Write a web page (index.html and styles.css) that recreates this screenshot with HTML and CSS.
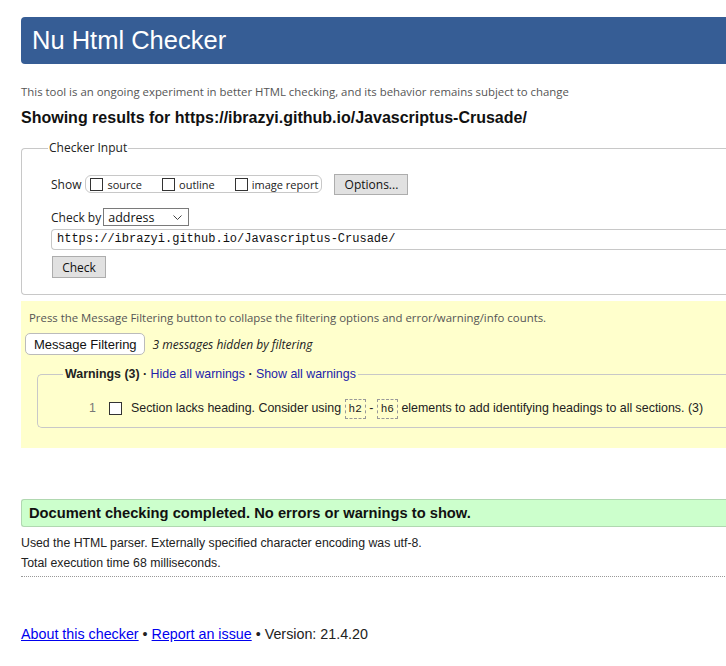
FILE: index.html
```html
<!DOCTYPE html>
<html>
<head>
<meta charset="utf-8">
<link rel="stylesheet" href="styles.css">
</head>
<body>
<div class="page">
  <h1 class="banner">Nu Html Checker</h1>
  <p class="intro">This tool is an ongoing experiment in better HTML checking, and its behavior remains subject to change</p>
  <h2 class="results">Showing results for https://ibrazyi.github.io/Javascriptus-Crusade/</h2>

  <fieldset class="input-set">
    <legend>Checker Input</legend>
    <div class="row show-row">
      <span class="lbl">Show</span>
      <span class="pill">
        <label><span class="cb"></span>source</label>
        <label><span class="cb"></span>outline</label>
        <label><span class="cb"></span>image report</label>
      </span>
      <span class="btn opts">Options...</span>
    </div>
    <div class="row by-row">
      <span class="lbl">Check by</span>
      <span class="select">address<svg class="chev" width="9" height="5" viewBox="0 0 9 5"><path d="M0.5 0.5 L4.5 4.5 L8.5 0.5" fill="none" stroke="#444" stroke-width="1"/></svg></span>
    </div>
    <div class="url">https://ibrazyi.github.io/Javascriptus-Crusade/</div>
    <span class="btn check">Check</span>
  </fieldset>

  <div class="filters">
    <p class="note">Press the Message Filtering button to collapse the filtering options and error/warning/info counts.</p>
    <div class="filter-row">
      <span class="mf">Message Filtering</span>
      <em class="hidden-count">3 messages hidden by filtering</em>
    </div>
    <fieldset class="warn-set">
      <legend>Warnings (3) · <a>Hide all warnings</a> · <a>Show all warnings</a></legend>
      <div class="warn-item">
        <span class="num">1</span>
        <span class="wcb"></span>
        <span class="wtext">Section lacks heading. Consider using <code>h2</code> - <code>h6</code> elements to add identifying headings to all sections. (3)</span>
      </div>
    </fieldset>
  </div>

  <p class="success">Document checking completed. No errors or warnings to show.</p>
  <p class="meta first">Used the HTML parser. Externally specified character encoding was utf-8.</p>
  <p class="meta">Total execution time 68 milliseconds.</p>
  <hr class="dots">

  <p class="footer"><a>About this checker</a> • <a>Report an issue</a> • Version: 21.4.20</p>
</div>
</body>
</html>
```

FILE: styles.css
```css
html, body {
  margin: 0;
  padding: 0;
  overflow: hidden;
  background: #fff;
}
body {
  font-family: "Liberation Sans", Arial, sans-serif;
  color: #222;
}
.page {
  padding-left: 21px;
  width: 760px;
}
.banner {
  margin: 17px 0 0 0;
  height: 47px;
  line-height: 47px;
  background: #365d95;
  color: #fff;
  font-weight: normal;
  font-size: 25.5px;
  padding-left: 11px;
  border-radius: 4px 0 0 4px;
}
.intro {
  margin: 19px 0 0 0;
  font-family: "Open Sans", sans-serif;
  font-size: 11.4px;
  line-height: 17px;
  color: #555;
}
.results {
  margin: 8px 0 0 0;
  font-size: 16px;
  line-height: 20px;
  font-weight: bold;
  color: #111;
}
.input-set {
  margin: 12px 0 0 0;
  border: 1px solid #c8c8c8;
  border-right: none;
  border-radius: 4px 0 0 4px;
  padding: 0 0 16px 29px;
  font-family: "Open Sans", sans-serif;
  font-size: 12px;
}
.input-set legend {
  margin-left: -3px;
  padding: 0 1px;
  font-size: 12px;
  line-height: 16px;
  color: #222;
}
.row {
  display: flex;
  align-items: center;
}
.show-row {
  margin-top: 17px;
  height: 22px;
}
.lbl {
  color: #222;
}
.pill {
  display: inline-flex;
  align-items: center;
  margin-left: 4px;
  height: 18px;
  width: 237px;
  box-sizing: border-box;
  border: 1px solid #c8c8c8;
  border-radius: 6px;
  padding: 0 0 0 4px;
  font-size: 11px;
}
.pill label {
  display: inline-flex;
  align-items: center;
  margin-right: 20px;
}
.pill label:last-child {
  margin-right: 0;
}
.cb {
  display: inline-block;
  width: 11px;
  height: 11px;
  border: 1px solid #333;
  margin-right: 4px;
  background: #fff;
}
.btn {
  display: inline-flex;
  align-items: center;
  justify-content: center;
  background: #e1e1e1;
  border: 1px solid #adadad;
  font-size: 12px;
  color: #111;
  box-sizing: border-box;
}
.opts {
  margin-left: 12px;
  width: 74px;
  height: 21px;
}
.by-row {
  margin-top: 13px;
  height: 18px;
}
.select {
  display: inline-flex;
  align-items: center;
  justify-content: space-between;
  margin-left: 2px;
  width: 86px;
  height: 18px;
  box-sizing: border-box;
  border: 1px solid #7a7a7a;
  padding: 0 6px 0 4px;
  font-size: 12.5px;
  color: #111;
}
.url {
  margin-top: 3px;
  height: 21px;
  box-sizing: border-box;
  border: 1px solid #c8c8c8;
  border-right: none;
  border-radius: 4px 0 0 4px;
  font-family: "Liberation Mono", "DejaVu Sans Mono", monospace;
  font-size: 12px;
  line-height: 19px;
  padding-left: 5px;
  color: #111;
}
.check {
  margin-top: 6px;
  margin-left: 1px;
  width: 54px;
  height: 22px;
}
.filters {
  margin-top: 6px;
  background: #ffffcc;
  padding: 9px 0 20px 4px;
}
.note {
  margin: 0 0 0 4px;
  font-family: "Open Sans", sans-serif;
  font-size: 11.4px;
  line-height: 16px;
  color: #555;
}
.filter-row {
  display: flex;
  align-items: center;
  margin-top: 7px;
}
.mf {
  display: inline-flex;
  align-items: center;
  height: 20px;
  padding: 0 7px 0 8px;
  background: #fff;
  border: 1px solid #bbb;
  border-radius: 5px;
  font-size: 13px;
  color: #111;
}
.hidden-count {
  margin-left: 8px;
  font-family: "Open Sans", sans-serif;
  font-size: 12px;
  color: #222;
}
.warn-set {
  margin: 11px 0 0 12px;
  padding: 0 0 9px 0;
  border: 1px solid #c8c8c8;
  border-right: none;
  border-radius: 5px 0 0 5px;
}
.warn-set legend {
  margin-left: 25px;
  padding: 0 2px;
  font-size: 12.4px;
  line-height: 16px;
  font-weight: bold;
  color: #222;
}
.warn-set legend a {
  font-weight: normal;
  color: #2222aa;
}
.warn-item {
  display: flex;
  align-items: center;
  margin-top: 16px;
  height: 20px;
  font-size: 12.4px;
  color: #222;
}
.num {
  margin-left: 51px;
  color: #777;
  width: 20px;
}
.wcb {
  display: inline-block;
  width: 11px;
  height: 11px;
  border: 1px solid #333;
  background: #fff;
  margin-right: 9px;
}
code {
  font-family: "Liberation Mono", monospace;
  font-size: 11px;
  border: 1px dashed #999;
  padding: 3px 3px;
}
.success {
  margin: 51px 0 0 0;
  background: #ccffcc;
  height: 28px;
  line-height: 27px;
  border: 1px solid #b0d8b0;
  border-right: none;
  border-radius: 3px 0 0 3px;
  padding-left: 7px;
  font-weight: bold;
  font-size: 14.7px;
  color: #111;
  box-sizing: border-box;
}
.meta {
  margin: 7px 0 0 0;
  font-size: 12.3px;
  line-height: 13px;
  color: #222;
}
.meta.first {
  margin-top: 10px;
}
.dots {
  margin: 6px 0 0 0;
  border: none;
  border-top: 1px dotted #999;
  height: 0;
}
.footer {
  margin: 49px 0 0 0;
  font-size: 14.3px;
  color: #222;
}
.footer a {
  color: #0000ee;
  text-decoration: underline;
}
```
